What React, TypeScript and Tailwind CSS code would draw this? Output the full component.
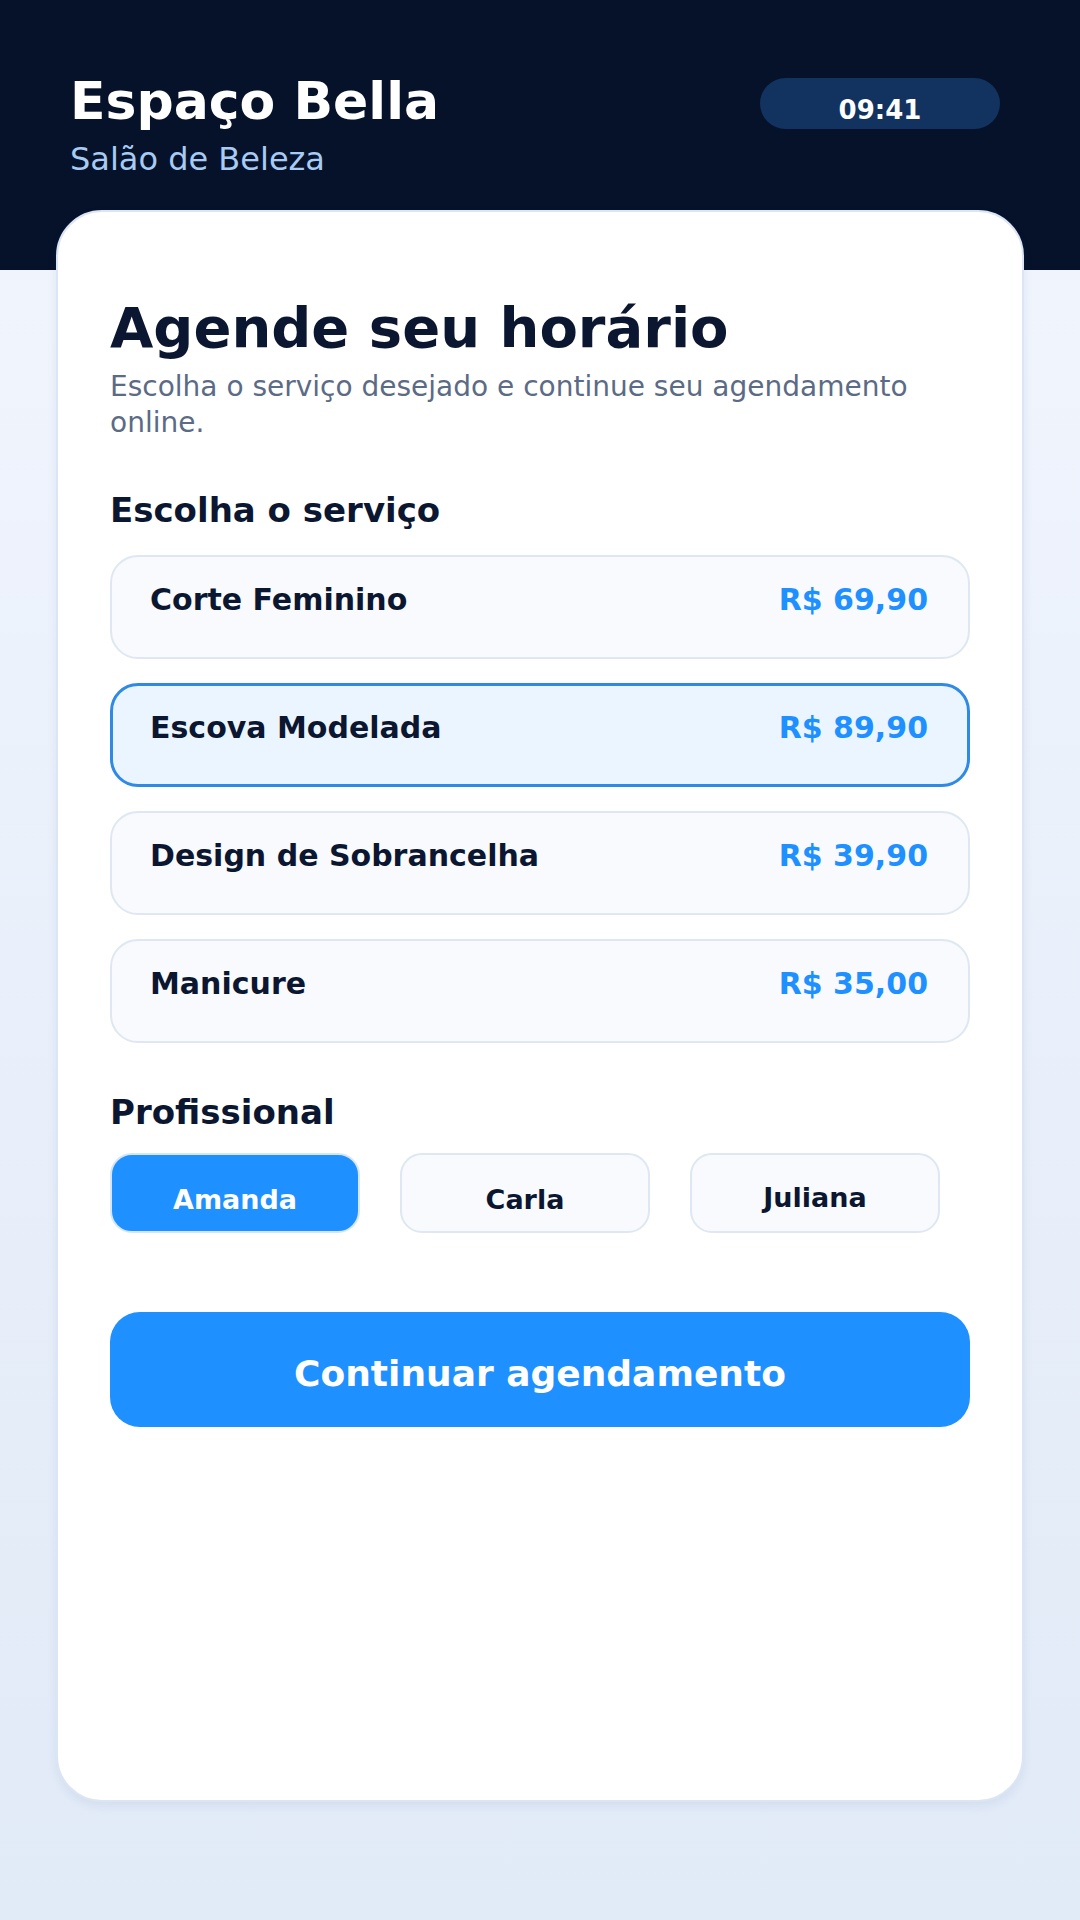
import React from "react";

const services = [
  { name: "Corte Feminino", price: "R$ 69,90", selected: false },
  { name: "Escova Modelada", price: "R$ 89,90", selected: true },
  { name: "Design de Sobrancelha", price: "R$ 39,90", selected: false },
  { name: "Manicure", price: "R$ 35,00", selected: false },
];

export default function App() {
  return (
    <div
      className="w-full h-[1920px] overflow-hidden bg-linear-to-b from-[#f2f6fe] to-[#e1eaf7]"
      style={{ fontFamily: '"DejaVu Sans", Verdana, sans-serif' }}
    >
      <header className="h-[270px] bg-[#06122a] flex justify-between items-start pl-[70px] pr-[80px]">
        <div className="pt-[75px] flex flex-col">
          <h1 className="text-[52px] leading-none font-bold text-white">Espaço Bella</h1>
          <p className="mt-[16px] text-[32px] leading-none text-[#a8cbf3]">Salão de Beleza</p>
        </div>
        <div className="mt-[78px] w-[240px] h-[51px] rounded-full bg-[#12335f] flex items-center justify-center pt-[12px]">
          <span className="text-[26px] leading-none font-bold text-white">09:41</span>
        </div>
      </header>

      <main className="relative -mt-[60px] mx-[56px] h-[1592px] rounded-[46px] border-2 border-[#dbe5f3] bg-white shadow-[0_4px_10px_rgba(40,80,140,0.08)] px-[52px] pt-[88px]">
        <h2 className="text-[56px] leading-none font-bold text-[#0b1630]">Agende seu horário</h2>
        <p className="mt-[13px] text-[28px] leading-[36px] text-[#5b6b86]">
          Escolha o serviço desejado e continue seu agendamento online.
        </p>

        <h3 className="mt-[52px] text-[34px] leading-none font-bold text-[#0b1630]">Escolha o serviço</h3>

        <div className="mt-[28px] flex flex-col gap-[24px]">
          {services.map((s) => (
            <div
              key={s.name}
              className={
                s.selected
                  ? "h-[104px] rounded-[28px] border-[3px] border-[#2f8ae6] bg-[#ebf5ff] flex items-start justify-between pl-[37px] pr-[39px] pt-[27px]"
                  : "h-[104px] rounded-[28px] border-2 border-[#dfe7f2] bg-[#f8fafe] flex items-start justify-between pl-[38px] pr-[40px] pt-[28px]"
              }
            >
              <span className="text-[30px] leading-none font-bold text-[#0b1630]">{s.name}</span>
              <span className="text-[30px] leading-none font-bold text-[#1e90ff]">{s.price}</span>
            </div>
          ))}
        </div>

        <h3 className="mt-[52px] text-[34px] leading-none font-bold text-[#0b1630]">Profissional</h3>

        <div className="mt-[24px] flex gap-[40px]">
          <button className="w-[250px] h-[80px] rounded-[22px] border-2 border-[#d5e6fa] bg-[#1e90ff] flex items-center justify-center pt-[12px]">
            <span className="text-[27px] leading-none font-bold text-white">Amanda</span>
          </button>
          <button className="w-[250px] h-[80px] rounded-[22px] border-2 border-[#dfe7f2] bg-[#f8fafe] flex items-center justify-center pt-[12px]">
            <span className="text-[27px] leading-none font-bold text-[#0b1630]">Carla</span>
          </button>
          <button className="w-[250px] h-[80px] rounded-[22px] border-2 border-[#dfe7f2] bg-[#f8fafe] flex items-center justify-center pt-[8px]">
            <span className="text-[27px] leading-none font-bold text-[#0b1630]">Juliana</span>
          </button>
        </div>

        <button className="mt-[79px] w-full h-[115px] rounded-[30px] bg-[#1e90ff] flex items-center justify-center pt-[8px]">
          <span className="text-[36px] leading-none font-bold text-white">Continuar agendamento</span>
        </button>
      </main>
    </div>
  );
}
